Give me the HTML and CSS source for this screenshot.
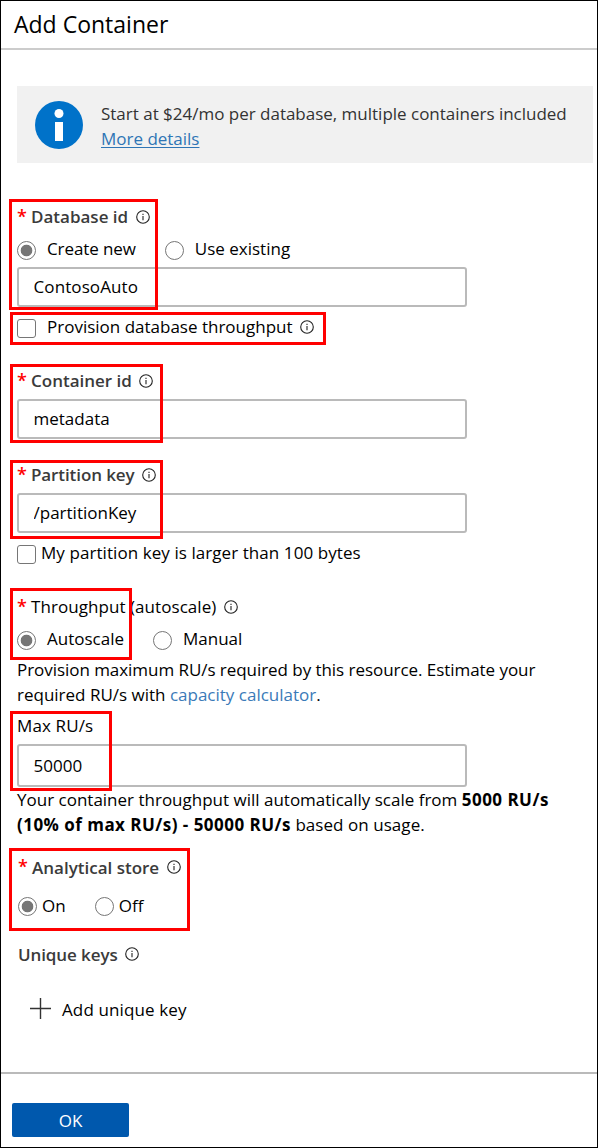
FILE: index.html
```html
<!DOCTYPE html>
<html lang="en">
<head>
<meta charset="utf-8">
<title>Add Container</title>
<link rel="stylesheet" href="styles.css">
</head>
<body>
<svg class="defs" width="0" height="0">
  <symbol id="info" viewBox="0 0 14 14">
    <circle cx="7" cy="7" r="6.3" fill="none" stroke="#222" stroke-width="1.1"/>
    <path d="M7 6v4.3M7 3.7v1.3" stroke="#222" stroke-width="1.1"/>
  </symbol>
</svg>
<main class="panel">
  <header class="header"><h1 class="title">Add Container</h1></header>
  <section class="banner">
    <svg class="banner-icon" viewBox="0 0 48 48">
      <circle cx="24" cy="24" r="24" fill="#0072c9"/>
      <circle cx="24" cy="12.5" r="4.5" fill="#fff"/>
      <path d="M20 21h8v19h-8z" fill="#fff"/>
    </svg>
    <div class="banner-text"><span class="t-start">Start at $24/mo per database, multiple containers included</span><br><a class="more" href="#">More details</a></div>
  </section>
  <form class="form">
    <section class="field database">
      <div class="label"><i class="star">*</i><b class="t-database">Database id</b><svg class="info"><use href="#info"/></svg></div>
      <div class="choices">
        <label class="choice"><input type="radio" name="db" checked><span class="t-create">Create new</span></label>
        <label class="choice existing"><input type="radio" name="db"><span class="t-existing">Use existing</span></label>
      </div>
      <input class="text t-contoso" type="text" value="ContosoAuto">
      <div class="check-row"><label class="choice"><input type="checkbox"><span class="t-provision">Provision database throughput</span></label><svg class="info"><use href="#info"/></svg></div>
    </section>
    <section class="field container">
      <div class="label"><i class="star">*</i><b class="t-container">Container id</b><svg class="info"><use href="#info"/></svg></div>
      <input class="text t-metadata" type="text" value="metadata">
    </section>
    <section class="field partition">
      <div class="label"><i class="star">*</i><b class="t-partition">Partition key</b><svg class="info"><use href="#info"/></svg></div>
      <input class="text t-key" type="text" value="/partitionKey">
      <div class="check-row"><label class="choice tight"><input type="checkbox"><span class="t-larger">My partition key is larger than 100 bytes</span></label></div>
    </section>
    <section class="field throughput">
      <div class="label plain"><i class="star">*</i><span class="t-throughput">Throughput (autoscale)</span><svg class="info"><use href="#info"/></svg></div>
      <div class="choices">
        <label class="choice"><input type="radio" name="tp" checked><span class="t-autoscale">Autoscale</span></label>
        <label class="choice manual"><input type="radio" name="tp"><span class="t-manual">Manual</span></label>
      </div>
      <p class="note"><span class="t-note1">Provision maximum RU/s required by this resource. Estimate your</span><br><span class="t-note2">required RU/s with <a class="calc" href="#">capacity calculator</a>.</span></p>
      <div class="label plain"><span class="t-max">Max RU/s</span></div>
      <input class="text tall t-50000" type="text" value="50000">
      <p class="note"><span class="t-note3">Your container throughput will automatically scale from <strong>5000 RU/s</strong></span><br><span class="t-note4"><strong>(10% of max RU/s) - 50000 RU/s</strong> based on usage.</span></p>
    </section>
    <section class="field analytical">
      <div class="label"><i class="star">*</i><b class="t-analytical">Analytical store</b><svg class="info"><use href="#info"/></svg></div>
      <div class="choices">
        <label class="choice tight"><input type="radio" name="an" checked><span class="t-on">On</span></label>
        <label class="choice tight off"><input type="radio" name="an"><span class="t-off">Off</span></label>
      </div>
    </section>
    <section class="field unique">
      <div class="label"><b class="t-unique">Unique keys</b><svg class="info"><use href="#info"/></svg></div>
      <div class="add"><svg class="plus" viewBox="0 0 21 21"><path d="M10.5 0v21M0 10.5h21" stroke="#333" stroke-width="1.4"/></svg><span class="t-add">Add unique key</span></div>
    </section>
  </form>
  <footer class="footer"><button class="ok">OK</button></footer>
  <div class="mark mark-database"></div>
  <div class="mark mark-provision"></div>
  <div class="mark mark-container"></div>
  <div class="mark mark-partition"></div>
  <div class="mark mark-throughput"></div>
  <div class="mark mark-max"></div>
  <div class="mark mark-analytical"></div>
</main>
</body>
</html>
```
FILE: styles.css
```css
* { box-sizing: border-box; }
body { margin: 0; background: #fff; color: #000; font: 17px/25px "Open Sans", "Noto Sans", sans-serif; white-space: nowrap; }
.defs { position: absolute; }
.panel { position: relative; display: flex; flex-direction: column; width: 598px; height: 1148px; border: 1px solid #000; overflow: hidden; }
.header { height: 49px; padding: 6px 13px 0; border-bottom: 2px solid #ccc; }
.title { margin: 0; font-size: 23px; line-height: 34px; font-weight: 400; }
.banner { display: flex; align-items: center; gap: 18px; width: 576px; height: 77px; margin: 36px 0 0 16px; padding-left: 18px; background: #f1f1f1; color: #333; }
.banner-icon { width: 48px; height: 48px; }
.banner-text { padding-top: 2px; letter-spacing: -0.01px; }
.more { color: #2e75b5; text-decoration: underline; text-decoration-thickness: 1px; text-underline-offset: 2px; }
.form { padding: 38px 0 0 16px; }
.label { display: flex; align-items: center; height: 36px; }
.database .label, .throughput .label:first-child { height: 32px; }
.label b, .label span { padding-bottom: 2px; }
.label b { font-weight: 600; color: #3b3b3b; }
.star { width: 14px; padding-bottom: 2px; color: #f00; font-style: normal; font-size: 18px; font-weight: 600; }
.info { width: 14px; height: 14px; margin-left: 7.5px; }
.check-row .info { margin-bottom: 2px; }
.choices { display: flex; align-items: center; height: 34px; }
.choice { display: flex; align-items: center; gap: 11px; }
.choice span { padding-bottom: 3px; }
.tight { gap: 5px; }
.existing { margin-left: 29px; }
.manual { margin-left: 29px; }
.off { margin-left: 29px; }
input[type="radio"], input[type="checkbox"] { appearance: none; width: 19px; height: 19px; margin: 0; border: 1px solid #767676; background: #fff; }
input[type="radio"] { border-radius: 50%; }
input[type="checkbox"] { border-radius: 3px; }
input[type="radio"]:checked { background: radial-gradient(circle, #767676 5.4px, #fff 6.2px); }
.text { display: block; width: 450px; height: 40px; margin: 0; padding: 0 14.5px 2px; border: 2px solid #bababa; border-radius: 3px; background: #fff; color: #000; font: inherit; outline: none; }
.tall { height: 43px; padding-bottom: 0; }
.check-row { display: flex; align-items: center; height: 42px; }
.container { margin-top: 14px; }
.partition { margin-top: 18px; }
.throughput { margin-top: 16px; }
.note { margin: 0 0 1px; }
.note strong { letter-spacing: 0.47px; }
.calc { color: #3a7ab8; text-decoration: none; }
.analytical { margin-top: 12px; }
.analytical .choices { margin-top: 4px; padding-left: 1px; }
.analytical .choice span { padding-bottom: 2px; }
.analytical .label, .unique .label { padding-left: 1px; }
.analytical .label b, .unique .label b { padding-bottom: 0; }
.unique { margin-top: 13px; }
.add { display: flex; align-items: center; gap: 11px; height: 36px; margin-top: 19px; padding-left: 13px; }
.plus { width: 21px; height: 21px; margin-bottom: 2px; }
.footer { margin-top: auto; height: 75px; padding: 29px 0 0 11px; border-top: 2px solid #bababa; }
.ok { display: block; width: 117px; height: 34px; padding: 0; border: 0; border-radius: 2px; background: #0058ad; color: #fff; font: inherit; }

/* Small tracking adjustments per label */
.t-create { letter-spacing: -0.1px; }
.t-contoso { letter-spacing: 0.1px; }
.t-partition, .t-unique { letter-spacing: -0.1px; }
.t-larger { letter-spacing: 0.07px; }
.t-throughput { letter-spacing: 0.06px; }
.t-note1 { letter-spacing: -0.05px; }
.t-max, .t-add { letter-spacing: 0.12px; }
.t-note4 { letter-spacing: 0.05px; }

/* Highlight frames laid over the form */
.mark { position: absolute; border: 3px solid #f00; pointer-events: none; }
.mark-database { left: 8px; top: 198px; width: 149px; height: 111px; }
.mark-provision { left: 9px; top: 311px; width: 316px; height: 33px; }
.mark-container { left: 9px; top: 363px; width: 153px; height: 79px; }
.mark-partition { left: 9px; top: 459px; width: 153px; height: 79px; }
.mark-throughput { left: 9px; top: 587px; width: 122px; height: 72px; }
.mark-max { left: 9px; top: 710px; width: 102px; height: 80px; }
.mark-analytical { left: 8px; top: 847px; width: 181px; height: 83px; }
```
